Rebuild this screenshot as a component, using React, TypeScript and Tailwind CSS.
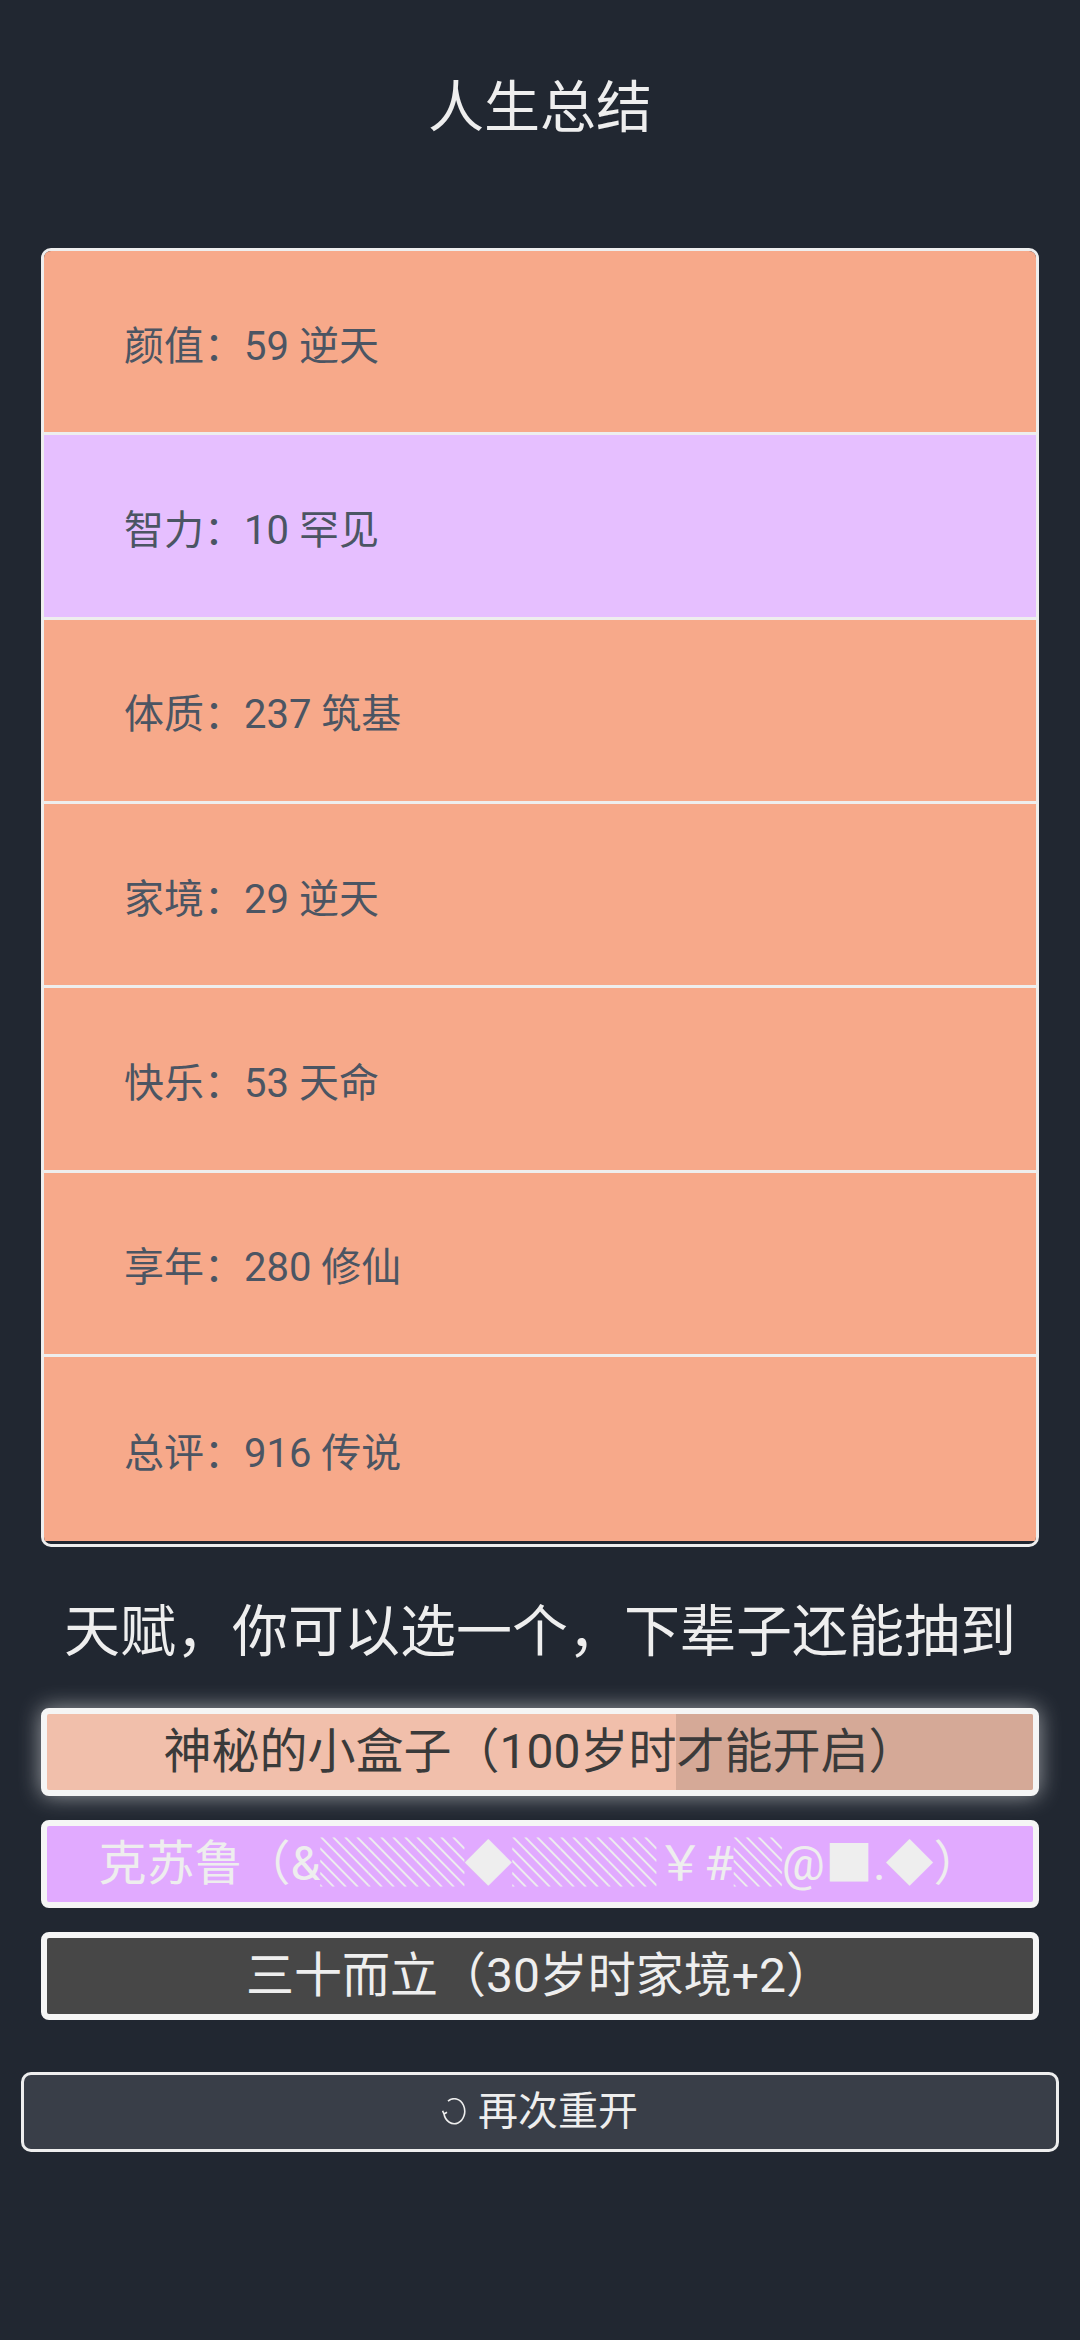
import React from 'react'

const rows = [
  { label: '颜值', value: '59 逆天', bg: 'bg-[#f7a98a]' },
  { label: '智力', value: '10 罕见', bg: 'bg-[#e6bfff]' },
  { label: '体质', value: '237 筑基', bg: 'bg-[#f7a98a]' },
  { label: '家境', value: '29 逆天', bg: 'bg-[#f7a98a]' },
  { label: '快乐', value: '53 天命', bg: 'bg-[#f7a98a]' },
  { label: '享年', value: '280 修仙', bg: 'bg-[#f7a98a]' },
  { label: '总评', value: '916 传说', bg: 'bg-[#f7a98a]' },
]

function RestartIcon() {
  return (
    <svg width="24" height="28" viewBox="0 0 24 28" fill="none" className="mr-[12px]">
      <path d="M6 3.2 A10.5 12.5 0 1 1 2 16" stroke="#eeeeee" strokeWidth="1.6" />
      <path d="M2 16 L0.6 12.8 M2 16 L5 14.3" stroke="#eeeeee" strokeWidth="1.6" />
    </svg>
  )
}

export default function App() {
  return (
    <div className="min-h-screen bg-[#212731] font-[Roboto,'Noto_Sans_CJK_SC',sans-serif] pb-[100px]">
      {/* 标题 */}
      <div className="h-[216px] flex items-center justify-center text-[56px] text-[#eeeeee]">
        人生总结
      </div>

      {/* 属性列表 */}
      <div className="mx-[41px] mt-[32px] border-[3px] border-[#eeeeee] rounded-[10px] overflow-hidden pb-[3px] bg-[#212731]">
        {rows.map((r, i) => (
          <div
            key={r.label}
            className={`h-[184.33px] flex items-center pl-[80px] pt-[10px] text-[40px] text-[#4b5563] ${r.bg} ${i < rows.length - 1 ? 'border-b-[3px] border-[#eeeeee]' : ''}`}
          >
            {r.label}：{r.value}
          </div>
        ))}
      </div>

      {/* 天赋 */}
      <div className="mt-[43px] text-center text-[56px] leading-[84px] text-[#eeeeee]">
        天赋，你可以选一个，下辈子还能抽到
      </div>

      <div className="mx-[41px] mt-[34px] flex flex-col gap-[24px]">
        <div className="relative h-[88px] border-[6px] border-[#f5f5f5] rounded-[8px] bg-[#f1bfab] overflow-hidden shadow-[0_0_22px_rgba(255,255,255,0.55)] flex items-center justify-center text-[48px] text-[#3a3a3a]">
          <div className="absolute top-0 bottom-0 left-[629px] right-0 bg-[#d5a997]" />
          <span className="relative">神秘的小盒子（100岁时才能开启）</span>
        </div>
        <div className="h-[88px] border-[6px] border-[#f5f5f5] rounded-[8px] bg-[#e1aaff] flex items-center justify-center text-[48px] text-[#eeeeee] whitespace-nowrap overflow-hidden">
          克苏鲁（&amp;▒▒▒◆▒▒▒￥#▒@■.◆）
        </div>
        <div className="h-[88px] border-[6px] border-[#f5f5f5] rounded-[8px] bg-[#474747] flex items-center justify-center text-[48px] text-[#eeeeee]">
          三十而立（30岁时家境+2）
        </div>
      </div>

      {/* 再次重开 */}
      <div className="mx-[21px] mt-[52px] h-[80px] border-[3px] border-[#eeeeee] rounded-[10px] bg-[#393e48] flex items-center justify-center text-[40px] text-[#eeeeee]">
        <RestartIcon />
        再次重开
      </div>
    </div>
  )
}
